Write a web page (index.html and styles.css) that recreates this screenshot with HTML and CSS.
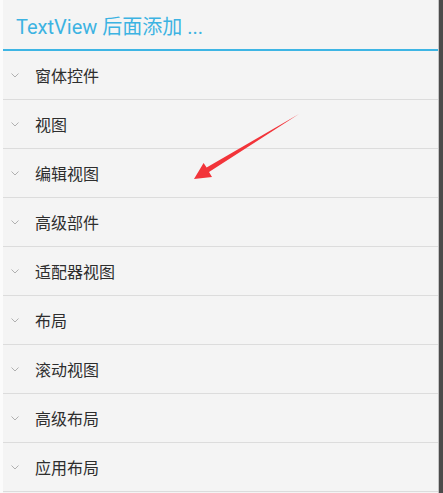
FILE: index.html
```html
<!DOCTYPE html>
<html>
<head>
<meta charset="utf-8">
<link rel="stylesheet" href="styles.css">
</head>
<body>
<div class="frame">
  <div class="edge-left"></div>
  <div class="panel">
    <div class="header">TextView 后面添加 ...</div>
    <ul class="list">
      <li class="row"><svg class="chev" viewBox="0 0 8 5" width="8" height="5"><path d="M0.5 0.5 L4 4 L7.5 0.5" fill="none" stroke="#b0b0b0" stroke-width="1"/></svg><span>窗体控件</span></li>
      <li class="row"><svg class="chev" viewBox="0 0 8 5" width="8" height="5"><path d="M0.5 0.5 L4 4 L7.5 0.5" fill="none" stroke="#b0b0b0" stroke-width="1"/></svg><span>视图</span></li>
      <li class="row"><svg class="chev" viewBox="0 0 8 5" width="8" height="5"><path d="M0.5 0.5 L4 4 L7.5 0.5" fill="none" stroke="#b0b0b0" stroke-width="1"/></svg><span>编辑视图</span></li>
      <li class="row"><svg class="chev" viewBox="0 0 8 5" width="8" height="5"><path d="M0.5 0.5 L4 4 L7.5 0.5" fill="none" stroke="#b0b0b0" stroke-width="1"/></svg><span>高级部件</span></li>
      <li class="row"><svg class="chev" viewBox="0 0 8 5" width="8" height="5"><path d="M0.5 0.5 L4 4 L7.5 0.5" fill="none" stroke="#b0b0b0" stroke-width="1"/></svg><span>适配器视图</span></li>
      <li class="row"><svg class="chev" viewBox="0 0 8 5" width="8" height="5"><path d="M0.5 0.5 L4 4 L7.5 0.5" fill="none" stroke="#b0b0b0" stroke-width="1"/></svg><span>布局</span></li>
      <li class="row"><svg class="chev" viewBox="0 0 8 5" width="8" height="5"><path d="M0.5 0.5 L4 4 L7.5 0.5" fill="none" stroke="#b0b0b0" stroke-width="1"/></svg><span>滚动视图</span></li>
      <li class="row"><svg class="chev" viewBox="0 0 8 5" width="8" height="5"><path d="M0.5 0.5 L4 4 L7.5 0.5" fill="none" stroke="#b0b0b0" stroke-width="1"/></svg><span>高级布局</span></li>
      <li class="row"><svg class="chev" viewBox="0 0 8 5" width="8" height="5"><path d="M0.5 0.5 L4 4 L7.5 0.5" fill="none" stroke="#b0b0b0" stroke-width="1"/></svg><span>应用布局</span></li>
    </ul>
  </div>
  <div class="edge-right"></div>
</div>
<svg class="arrow" viewBox="0 0 443 493" width="443" height="493">
  <polygon points="194,179 203.6,163 206.6,167.4 299,114 209,172 212,177" fill="#f2343a"/>
</svg>
</body>
</html>
```
FILE: styles.css
```css
html, body {
  margin: 0;
  padding: 0;
  background: #f4f4f4;
  overflow: hidden;
}
body {
  width: 443px;
  height: 493px;
  position: relative;
  font-family: "Noto Sans CJK SC", "Noto Sans", sans-serif;
}
.frame {
  display: flex;
  height: 493px;
}
.edge-left {
  width: 3px;
  background: #fbfbfb;
}
.panel {
  flex: 1;
  background: #f4f4f4;
  border-right: 1px solid #c4c4c4;
}
.edge-right {
  width: 4px;
  background: #4b4b4b;
}
.header {
  height: 51px;
  box-sizing: border-box;
  padding-left: 13px;
  padding-top: 1px;
  display: flex;
  align-items: center;
  font-family: Roboto, "Noto Sans CJK SC", sans-serif;
  font-size: 20px;
  color: #3cb3e2;
  border-bottom: 2px solid #3db5e4;
}
.list {
  list-style: none;
  margin: 0;
  padding: 0;
}
.row {
  height: 48px;
  border-bottom: 1px solid #dcdcdc;
  display: flex;
  align-items: center;
  font-size: 16px;
  color: #2e2e2e;
}
.chev {
  margin-left: 8px;
  margin-right: 16px;
}
.arrow {
  position: absolute;
  left: 0;
  top: 0;
  pointer-events: none;
}
```
